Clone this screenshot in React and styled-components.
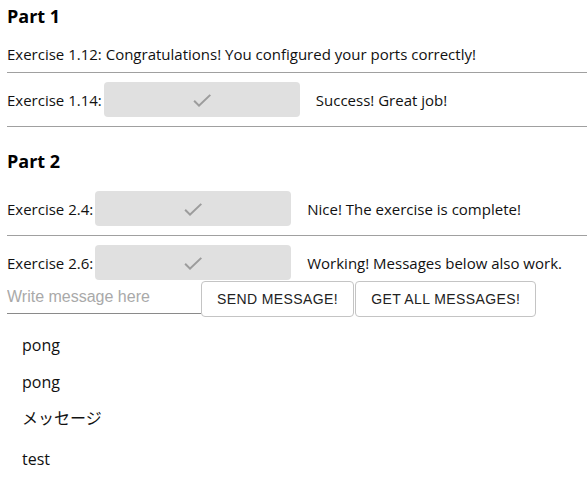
import styled, { createGlobalStyle } from "styled-components";

const GlobalStyle = createGlobalStyle`
  body {
    margin: 0;
    background: #fff;
    font-family: "Open Sans", "Noto Sans CJK JP", sans-serif;
    color: #111;
  }
`;

const Page = styled.div`
  padding: 4px 0 0 7px;
  font-size: 15px;
`;

const Heading = styled.h3`
  font-size: 18px;
  font-weight: 700;
  margin: ${(p) => p.$top || 0}px 0 0;
  line-height: 24px;
  color: #000;
`;

const Divider = styled.hr`
  border: none;
  border-top: 1px solid #a0a0a0;
  margin: 0;
`;

const Row = styled.div`
  display: flex;
  align-items: center;
  height: ${(p) => p.$height || 35}px;
  margin: ${(p) => p.$margin || "0"};
`;

const Label = styled.span`
  margin-right: 2px;
`;

const DoneButton = styled.button`
  width: 196px;
  height: 35px;
  border: none;
  border-radius: 4px;
  background: #e0e0e0;
  display: flex;
  align-items: center;
  justify-content: center;
  padding: 0;
  margin-right: 16px;
  svg {
    width: 24px;
    height: 24px;
    fill: rgba(0, 0, 0, 0.3);
  }
`;

const MessageRow = styled.div`
  display: flex;
  align-items: stretch;
  height: 36px;
  margin-top: 1px;
`;

const MessageInput = styled.input`
  width: 194px;
  border: none;
  border-bottom: 1px solid #8a8a8a;
  font-family: "Liberation Sans", Arial, sans-serif;
  font-size: 16px;
  padding: 0;
  height: 32px;
  margin: 0;
  outline: none;
  &::placeholder {
    color: #a9a9a9;
  }
`;

const OutlineButton = styled.button`
  background: #fff;
  border: 1px solid #c4c4c4;
  border-radius: 4px;
  font-family: "Liberation Sans", Arial, sans-serif;
  font-size: 14px;
  letter-spacing: 0.4px;
  text-transform: uppercase;
  color: #222;
  padding: 0 15px;
  height: 36px;
  margin: 0 1px 0 0;
`;

const MessageList = styled.div`
  padding: 17px 0 0 15px;
  font-size: 16px;
`;

const Message = styled.p`
  margin: 0;
  height: ${(p) => p.$h || 37}px;
  line-height: 22px;
`;

const Check = () => (
  <svg viewBox="0 0 24 24" aria-hidden="true">
    <path d="M9 16.17 4.83 12l-1.42 1.41L9 19 21 7.59 19.59 6.17z" />
  </svg>
);

const Exercise = ({ label, text, margin }) => (
  <Row $margin={margin}>
    <Label>{label}</Label>
    <DoneButton disabled>
      <Check />
    </DoneButton>
    <span>{text}</span>
  </Row>
);

const messages = [
  { text: "pong", h: 37 },
  { text: "pong", h: 36 },
  { text: "メッセージ", h: 41 },
  { text: "test", h: 37 },
];

export default function App() {
  return (
    <>
      <GlobalStyle />
      <Page>
        <Heading>Part 1</Heading>
        <Row $height={22} $margin="15px 0 7px">
          Exercise 1.12: Congratulations! You configured your ports correctly!
        </Row>
        <Divider />
        <Exercise
          label="Exercise 1.14:"
          text="Success! Great job!"
          margin="9px 0 9px"
        />
        <Divider />
        <Heading $top={22}>Part 2</Heading>
        <Exercise
          label="Exercise 2.4:"
          text="Nice! The exercise is complete!"
          margin="18px 0 9px"
        />
        <Divider />
        <Exercise
          label="Exercise 2.6:"
          text="Working! Messages below also work."
          margin="9px 0 0"
        />
        <MessageRow>
          <MessageInput placeholder="Write message here" />
          <OutlineButton>Send message!</OutlineButton>
          <OutlineButton>Get all messages!</OutlineButton>
        </MessageRow>
        <MessageList>
          {messages.map((m, i) => (
            <Message key={i} $h={m.h}>
              {m.text}
            </Message>
          ))}
        </MessageList>
      </Page>
    </>
  );
}
